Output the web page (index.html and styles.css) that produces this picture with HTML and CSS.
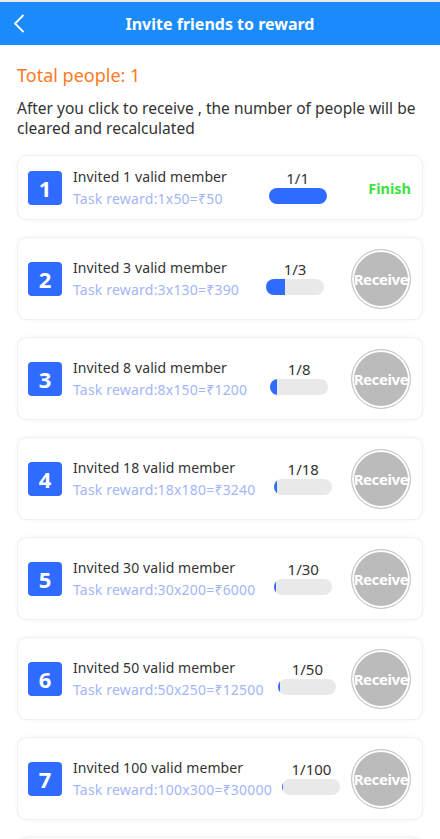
FILE: index.html
```html
<!DOCTYPE html>
<html>
<head>
<meta charset="utf-8">
<link rel="stylesheet" href="styles.css">
</head>
<body>
<div class="topline"></div>
<header class="bar">
  <svg class="back" width="12" height="19" viewBox="0 0 12 19"><polyline points="10.5,1 2,9.5 10.5,18" fill="none" stroke="#fff" stroke-width="1.8"/></svg>
  <div class="title">Invite friends to reward</div>
</header>
<main class="page">
  <div class="total">Total people: 1</div>
  <p class="note">After you click to receive , the number of people will be cleared and recalculated</p>
  <div class="list">
    <div class="card">
      <div class="left"><div class="num">1</div><div class="info"><div class="t">Invited 1 valid member</div><div class="r">Task reward:1x50=₹50</div></div></div>
      <div class="prog"><div class="lbl">1/1</div><div class="track"><div class="fill" style="width:100%"></div></div></div>
      <div class="finish">Finish</div>
    </div>
    <div class="card">
      <div class="left"><div class="num">2</div><div class="info"><div class="t">Invited 3 valid member</div><div class="r">Task reward:3x130=₹390</div></div></div>
      <div class="prog"><div class="lbl">1/3</div><div class="track"><div class="fill" style="width:33.3%"></div></div></div>
      <div class="btn">Receive</div>
    </div>
    <div class="card">
      <div class="left"><div class="num">3</div><div class="info"><div class="t">Invited 8 valid member</div><div class="r">Task reward:8x150=₹1200</div></div></div>
      <div class="prog"><div class="lbl">1/8</div><div class="track"><div class="fill" style="width:12.5%"></div></div></div>
      <div class="btn">Receive</div>
    </div>
    <div class="card">
      <div class="left"><div class="num">4</div><div class="info"><div class="t">Invited 18 valid member</div><div class="r">Task reward:18x180=₹3240</div></div></div>
      <div class="prog"><div class="lbl">1/18</div><div class="track"><div class="fill" style="width:5.56%"></div></div></div>
      <div class="btn">Receive</div>
    </div>
    <div class="card">
      <div class="left"><div class="num">5</div><div class="info"><div class="t">Invited 30 valid member</div><div class="r">Task reward:30x200=₹6000</div></div></div>
      <div class="prog"><div class="lbl">1/30</div><div class="track"><div class="fill" style="width:3.33%"></div></div></div>
      <div class="btn">Receive</div>
    </div>
    <div class="card">
      <div class="left"><div class="num">6</div><div class="info"><div class="t">Invited 50 valid member</div><div class="r">Task reward:50x250=₹12500</div></div></div>
      <div class="prog"><div class="lbl">1/50</div><div class="track"><div class="fill" style="width:2%"></div></div></div>
      <div class="btn">Receive</div>
    </div>
    <div class="card">
      <div class="left"><div class="num">7</div><div class="info"><div class="t">Invited 100 valid member</div><div class="r">Task reward:100x300=₹30000</div></div></div>
      <div class="prog"><div class="lbl">1/100</div><div class="track"><div class="fill" style="width:1%"></div></div></div>
      <div class="btn">Receive</div>
    </div>
    <div class="card">
      <div class="left"><div class="num">8</div><div class="info"><div class="t">Invited 200 valid member</div><div class="r">Task reward:200x350=₹70000</div></div></div>
      <div class="prog"><div class="lbl">1/200</div><div class="track"><div class="fill" style="width:0.5%"></div></div></div>
      <div class="btn">Receive</div>
    </div>
  </div>
</main>
</body>
</html>
```

FILE: styles.css
```css
* { box-sizing: border-box; }
html, body { margin: 0; padding: 0; background: #fff; }
body { font-family: "Noto Sans", "Open Sans", sans-serif; color: #333; }

.topline { height: 2px; background: #e9e9e9; }
.bar {
  height: 43px;
  background: #1b8bfb;
  display: flex;
  align-items: center;
  justify-content: center;
  position: relative;
}
.back { position: absolute; left: 13px; top: 12px; }
.title { color: #fff; font-weight: bold; font-size: 16px; }

.page { padding: 0 17px; }
.total { color: #ff7a22; font-size: 18px; line-height: 24px; margin-top: 18px; }
.note { margin: 11px 0 0; font-size: 15.5px; line-height: 20px; color: #333; }

.list { display: flex; flex-direction: column; gap: 17px; margin-top: 17px; }
.card {
  border: 1px solid #f1f1f1;
  border-radius: 10px;
  box-shadow: 0 0 4px rgba(0,0,0,0.05);
  padding: 10.5px 11px 10.5px 10px;
  display: flex;
  align-items: center;
  justify-content: space-between;
  background: #fff;
}
.left { display: flex; align-items: center; }
.num {
  width: 34px; height: 34px;
  background: #306bff;
  border-radius: 4px;
  color: #fff; font-weight: bold; font-size: 22px;
  display: flex; align-items: center; justify-content: center;
  margin-right: 11px;
}
.info .t { font-size: 14px; line-height: 20px; color: #333; letter-spacing: 0.1px; }
.info .r { font-size: 14px; line-height: 20px; color: #a3b6f7; margin-top: 2px; letter-spacing: 0.2px; }

.prog { width: 58px; display: flex; flex-direction: column; align-items: center; margin-bottom: 3px; }
.lbl { font-size: 15px; line-height: 20px; color: #333; white-space: nowrap; }
.track { width: 58px; height: 16px; border-radius: 8px; background: #e9e9e9; overflow: hidden; }
.fill { height: 100%; background: #306bff; }

.finish { color: #3ee23e; font-weight: bold; font-size: 14.5px; }
.btn {
  width: 60px; height: 60px;
  border-radius: 50%;
  background: #bbbbbb;
  border: 1px solid #c9c9c9;
  box-shadow: inset 0 0 0 2px #fff;
  color: #fff; font-weight: bold; font-size: 15px;
  display: flex; align-items: center; justify-content: center;
  letter-spacing: -0.4px;
}
```
